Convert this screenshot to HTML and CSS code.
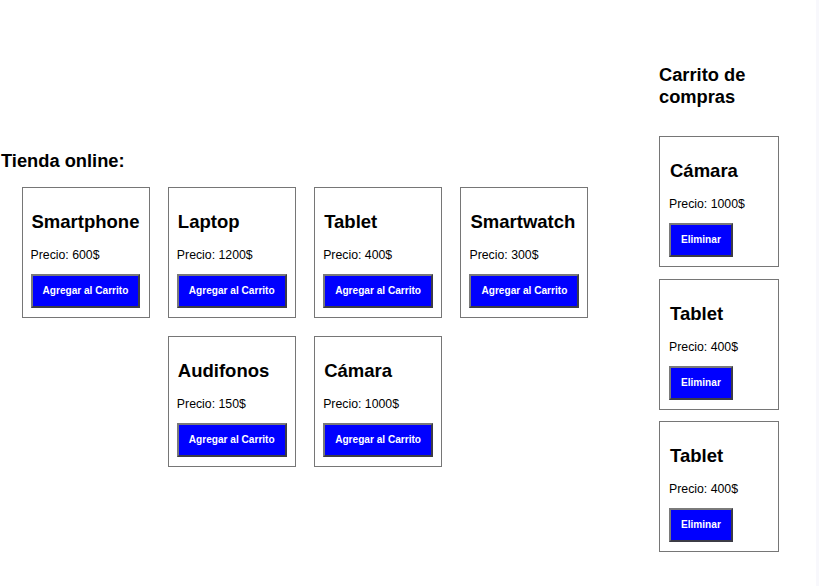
FILE: index.html
```html
<!DOCTYPE html>
<html lang="es">
<head>
<meta charset="utf-8">
<title>Tienda online</title>
<link rel="stylesheet" href="styles.css">
</head>
<body>
<div class="page">
  <section class="shop">
    <h2 class="section-title shop-title">Tienda online:</h2>
    <div class="products">
      <div class="card">
        <h3 class="card-title">Smartphone</h3>
        <p class="card-price">Precio: 600$</p>
        <button class="btn">Agregar al Carrito</button>
      </div>
      <div class="card">
        <h3 class="card-title">Laptop</h3>
        <p class="card-price">Precio: 1200$</p>
        <button class="btn">Agregar al Carrito</button>
      </div>
      <div class="card">
        <h3 class="card-title">Tablet</h3>
        <p class="card-price">Precio: 400$</p>
        <button class="btn">Agregar al Carrito</button>
      </div>
      <div class="card">
        <h3 class="card-title">Smartwatch</h3>
        <p class="card-price">Precio: 300$</p>
        <button class="btn">Agregar al Carrito</button>
      </div>
      <div class="card">
        <h3 class="card-title">Audifonos</h3>
        <p class="card-price">Precio: 150$</p>
        <button class="btn">Agregar al Carrito</button>
      </div>
      <div class="card">
        <h3 class="card-title">Cámara</h3>
        <p class="card-price">Precio: 1000$</p>
        <button class="btn">Agregar al Carrito</button>
      </div>
    </div>
  </section>
  <aside class="cart">
    <h2 class="section-title cart-title">Carrito de compras</h2>
    <div class="cart-items">
      <div class="card cart-card">
        <h3 class="card-title">Cámara</h3>
        <p class="card-price">Precio: 1000$</p>
        <button class="btn">Eliminar</button>
      </div>
      <div class="card cart-card">
        <h3 class="card-title">Tablet</h3>
        <p class="card-price">Precio: 400$</p>
        <button class="btn">Eliminar</button>
      </div>
      <div class="card cart-card">
        <h3 class="card-title">Tablet</h3>
        <p class="card-price">Precio: 400$</p>
        <button class="btn">Eliminar</button>
      </div>
    </div>
  </aside>
</div>
</body>
</html>
```
FILE: styles.css
```css
html {
  background: #f8f8fc;
}

body {
  margin: 0;
  width: 816px;
  min-height: 586px;
  background: #ffffff;
  font-family: "Liberation Sans", Arial, sans-serif;
  color: #000;
}

.page {
  display: flex;
  align-items: center;
  box-sizing: border-box;
  min-height: 586px;
  padding-top: 30px;
}

.shop {
  width: 610px;
  flex: none;
}

.section-title {
  font-size: 18.3px;
  font-weight: bold;
  margin: 0;
}

.shop-title {
  padding-left: 1px;
  margin-bottom: 15px;
}

.products {
  display: flex;
  flex-wrap: wrap;
  justify-content: center;
  column-gap: 18.33px;
  row-gap: 18px;
}

.card {
  width: 128px;
  box-sizing: border-box;
  border: 1px solid #767676;
  padding: 8px 8px 9px;
}

.card-title {
  font-size: 18.5px;
  font-weight: bold;
  margin: 15px 0 15px;
  padding-left: 1px;
}

.card-price {
  font-size: 12.3px;
  margin: 0 0 12px;
}

.btn {
  display: block;
  font-family: "Liberation Sans", Arial, sans-serif;
  font-size: 10.1px;
  line-height: 12px;
  font-weight: bold;
  color: #fff;
  background: #0000ff;
  border: 2px solid;
  border-color: #7a7a7a #3c3c46 #3c3c46 #7a7a7a;
  padding: 9px 10px;
  margin: 0;
}

.cart {
  width: 120px;
  margin-left: 49px;
  flex: none;
}

.cart-title {
  margin-bottom: 28px;
}

.cart-items {
  display: flex;
  flex-direction: column;
  gap: 11.5px;
}

.cart-card {
  width: 120px;
  padding-left: 9px;
}
```
